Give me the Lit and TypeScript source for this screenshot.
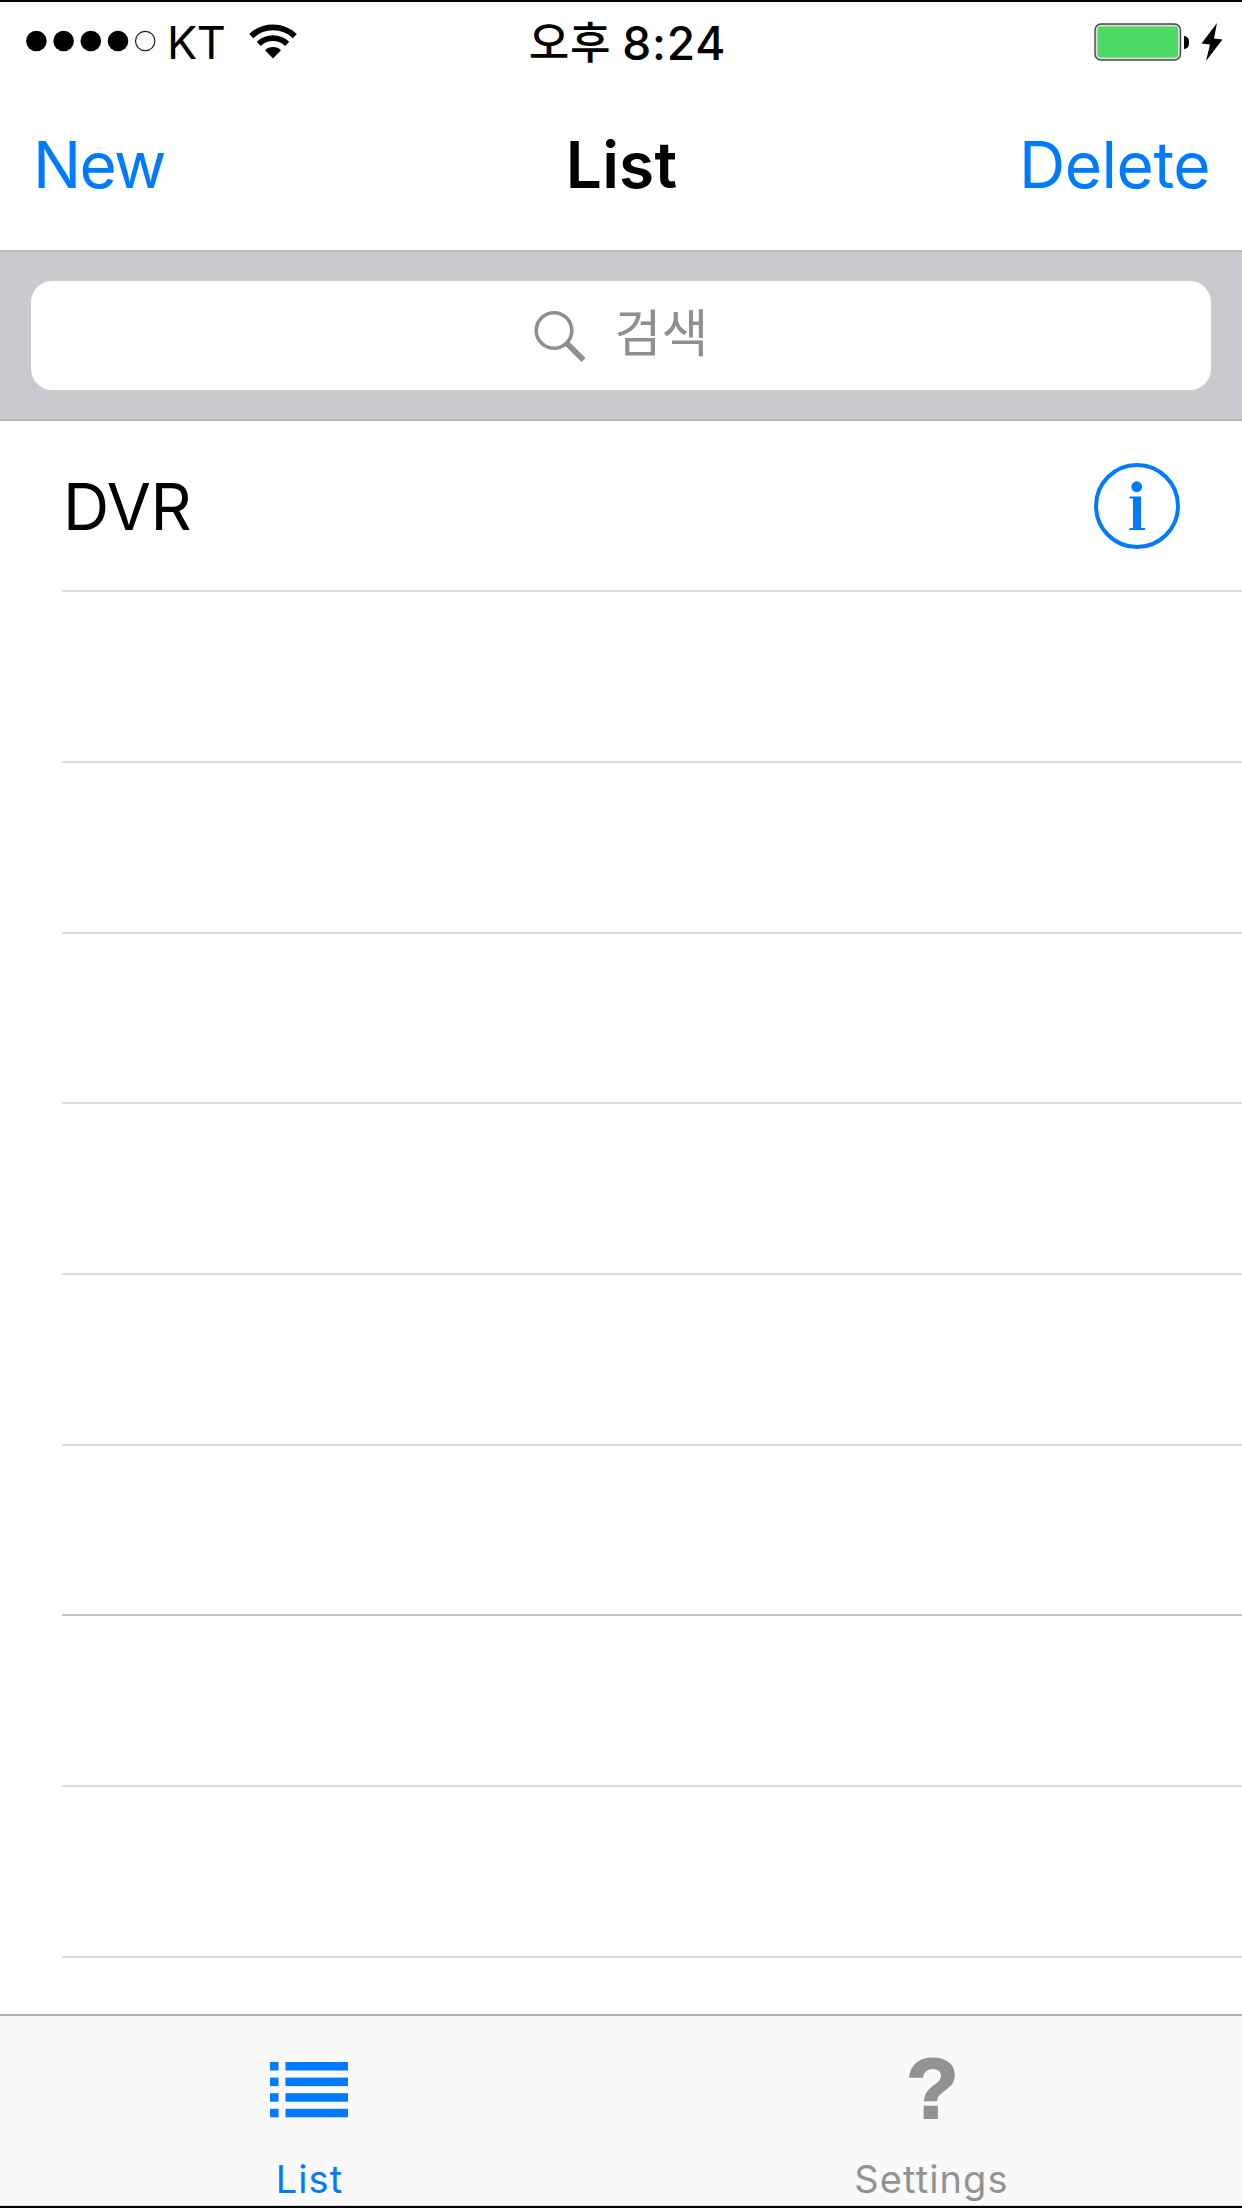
import { LitElement, html, css, svg } from "lit";
import { customElement, property, state } from "lit/decorators.js";

const font = css`"Inter", "Noto Sans CJK KR", sans-serif`;

@customElement("status-bar")
class StatusBar extends LitElement {
  @property({ type: Number }) signal = 4;

  static styles = css`
    :host {
      display: grid;
      grid-template-columns: 1fr auto 1fr;
      align-items: center;
      height: 81px;
      box-sizing: border-box;
      padding: 0 19px 0 26px;
      font-family: ${font};
      color: #000;
    }
    .left, .right { display: flex; align-items: center; }
    .right { justify-content: flex-end; gap: 11px; margin-top: -2px; }
    .dots { display: block; width: 131px; height: 22px; margin-top: -3px; }
    .carrier { font-size: 45px; line-height: 60px; margin-left: 10px; letter-spacing: -0.6px; }
    .wifi { display: block; width: 48px; height: 36px; margin-left: 24px; margin-top: -4px; }
    .time { display: flex; align-items: center; line-height: 60px; font-size: 46px; font-weight: 550; padding-left: 6px; letter-spacing: 0.8px; }
    .ampm { font-family: "Noto Sans CJK KR", sans-serif; font-size: 44px; font-weight: 500; margin-right: 11px; margin-top: -5px; }
    .battery { display: block; width: 96px; height: 40px; }
    .bolt { display: block; width: 22px; height: 40px; }
  `;

  render() {
    return html`
      <div class="left">
        <svg class="dots" viewBox="0 0 131 22">
          ${[0, 1, 2, 3, 4].map((i) =>
            i < this.signal
              ? svg`<circle cx=${10.4 + i * 27.2} cy="11" r="10.3" fill="#000"/>`
              : svg`<circle cx=${10.4 + i * 27.2} cy="11" r="9.7" fill="none" stroke="#222" stroke-width="1.2"/>`
          )}
        </svg>
        <span class="carrier">KT</span>
        <svg class="wifi" viewBox="0 0 48 36" fill="none" stroke="#000">
          <path d="M2.2 13.1A31.6 31.6 0 0 1 45.8 13.1" stroke-width="5.8"/>
          <path d="M9.8 20.8A20.4 20.4 0 0 1 38.2 20.8" stroke-width="5.8"/>
          <path d="M24 35.5L16 27.3A11.4 11.4 0 0 1 32 27.3Z" fill="#000" stroke="none"/>
        </svg>
      </div>
      <div class="time"><span class="ampm">오후</span><span>8:24</span></div>
      <div class="right">
        <svg class="battery" viewBox="0 0 96 40">
          <rect x="1" y="2" width="85.5" height="36" rx="6" fill="#dcdcdc" stroke="#444" stroke-width="1.4"/>
          <rect x="3.6" y="4.6" width="80.4" height="31" rx="3" fill="#4cd964"/>
          <path d="M90 14C94 14.5 95 17 95 20.5C95 24 94 26.500 90 27Z" fill="#000"/>
        </svg>
        <svg class="bolt" viewBox="0 0 22 40"><path d="M16 1L0.500 21.500L9 22.500L5 39L21.500 17.500L13 16.500Z" fill="#000"/></svg>
      </div>
    `;
  }
}

@customElement("nav-bar")
class NavBar extends LitElement {
  @property() heading = "";

  static styles = css`
    :host {
      display: grid;
      grid-template-columns: 1fr auto 1fr;
      align-items: center;
      height: 169px;
      box-sizing: border-box;
      padding: 0 32px 3px 33px;
      border-bottom: 2px solid #bcbcbe;
      font-family: ${font};
      font-size: 64px;
      line-height: 80px;
    }
    .action { color: #007aff; letter-spacing: -1.7px; }
    .end { justify-self: end; letter-spacing: -0.5px; }
    .title { color: #000; font-weight: 600; letter-spacing: 0.2px; }
  `;

  render() {
    return html`
      <span class="action">New</span>
      <span class="title">${this.heading}</span>
      <span class="action end">Delete</span>
    `;
  }
}

@customElement("search-bar")
class SearchBar extends LitElement {
  @property() placeholder = "";

  static styles = css`
    :host {
      display: block;
      height: 169.4px;
      box-sizing: border-box;
      padding: 29.4px 31px 29px;
      background: #c9c9ce;
      border-bottom: 2px solid #b7b7ba;
    }
    .field {
      display: flex;
      align-items: center;
      justify-content: center;
      height: 109px;
      border-radius: 21px;
      background: #fff;
      color: #8e8e93;
    }
    .glass { display: block; width: 52px; height: 52px; margin-right: 29px; }
    .hint { font: 400 51px/60px "Noto Sans CJK KR", sans-serif; margin-top: -11px; }
  `;

  render() {
    return html`
      <div class="field">
        <svg class="glass" viewBox="0 0 52 52" fill="none" stroke="#8e8e93">
          <circle cx="20" cy="20.500" r="17.800" stroke-width="3.600"/>
          <path d="M32.500 33L49.500 50" stroke-width="5.600"/>
        </svg>
        <span class="hint">${this.placeholder}</span>
      </div>
    `;
  }
}

@customElement("item-list")
class ItemList extends LitElement {
  @property({ attribute: false }) items: string[] = [];
  @property({ type: Number }) rows = 9;

  static styles = css`
    :host { display: block; flex: 1; min-height: 0; overflow: hidden; background: #fff; }
    .row {
      display: flex;
      align-items: center;
      justify-content: space-between;
      height: 170.72px;
      box-sizing: border-box;
      margin-left: 62px;
      padding: 1px 61px 0 0;
      border-bottom: 2px solid #dadadc;
      font-family: ${font};
      font-size: 64px;
      line-height: 80px;
      color: #000;
    }
    .row:nth-of-type(7) { border-bottom-color: #c4c4c8; }
    .name { letter-spacing: -0.4px; padding: 2px 0 0 1px; }
    .info { display: block; width: 88px; height: 88px; }
  `;

  render() {
    return html`${Array.from({ length: this.rows }, (_, i) => this.items[i]).map(
      (name) => html`
        <div class="row">
          ${name
            ? html`
                <span class="name">${name}</span>
                <svg class="info" viewBox="0 0 88 88" fill="#007aff">
                  <circle cx="44" cy="44" r="41" fill="none" stroke="#007aff" stroke-width="4"/>
                  <circle cx="43.700" cy="24.700" r="5.400"/>
                  <path d="M36.500 34.500H48V66H52V68H36.500V66H40V36.500H36.500Z"/>
                </svg>
              `
            : null}
        </div>
      `
    )}`;
  }
}

@customElement("tab-bar")
class TabBar extends LitElement {
  @state() private active = "List";

  static styles = css`
    :host {
      display: grid;
      grid-template-columns: 1fr 1fr;
      height: 192px;
      box-sizing: border-box;
      background: #f9f9f9;
      border-top: 2px solid #adadad;
      border-bottom: 1px solid #dcdcdc;
      font-family: ${font};
    }
    .tab {
      display: flex;
      flex-direction: column;
      align-items: center;
      color: #929292;
      cursor: pointer;
    }
    .tab.active { color: #007aff; }
    .icon { display: flex; align-items: center; justify-content: center; height: 139px; }
    .lines { display: block; width: 80px; height: 58px; margin: 8px 3px 0 0; }
    .mark { font: 700 86px/90px "Liberation Sans", sans-serif; -webkit-text-stroke: 2px currentColor; margin: 5px 0 0 2px; }
    .label { font-size: 38px; line-height: 48px; letter-spacing: 1.1px; }
    .active .label { margin-right: 2px; }
  `;

  render() {
    return html`
      <div class="tab ${this.active === "List" ? "active" : ""}" @click=${() => (this.active = "List")}>
        <div class="icon">
          <svg class="lines" viewBox="0 0 80 58" fill="currentColor">
            ${[0, 1, 2, 3].map(
              (i) => svg`<rect x="1" y=${1 + i * 15.6} width="8.500" height="8.500"/><rect x="16.500" y=${1 + i * 15.6} width="62.500" height="8.500"/>`
            )}
          </svg>
        </div>
        <span class="label">List</span>
      </div>
      <div class="tab ${this.active === "Settings" ? "active" : ""}" @click=${() => (this.active = "Settings")}>
        <div class="icon"><span class="mark" aria-hidden="true">?</span></div>
        <span class="label">Settings</span>
      </div>
    `;
  }
}

@customElement("app-root")
class AppRoot extends LitElement {
  static styles = css`
    :host {
      display: flex;
      flex-direction: column;
      height: 2208px;
      box-sizing: border-box;
      border-top: 2px solid #000;
      border-bottom: 2px solid #000;
      background: #fff;
      overflow: hidden;
    }
  `;

  render() {
    return html`
      <status-bar></status-bar>
      <nav-bar heading="List"></nav-bar>
      <search-bar placeholder="검색"></search-bar>
      <item-list .items=${["DVR"]}></item-list>
      <tab-bar></tab-bar>
    `;
  }
}
